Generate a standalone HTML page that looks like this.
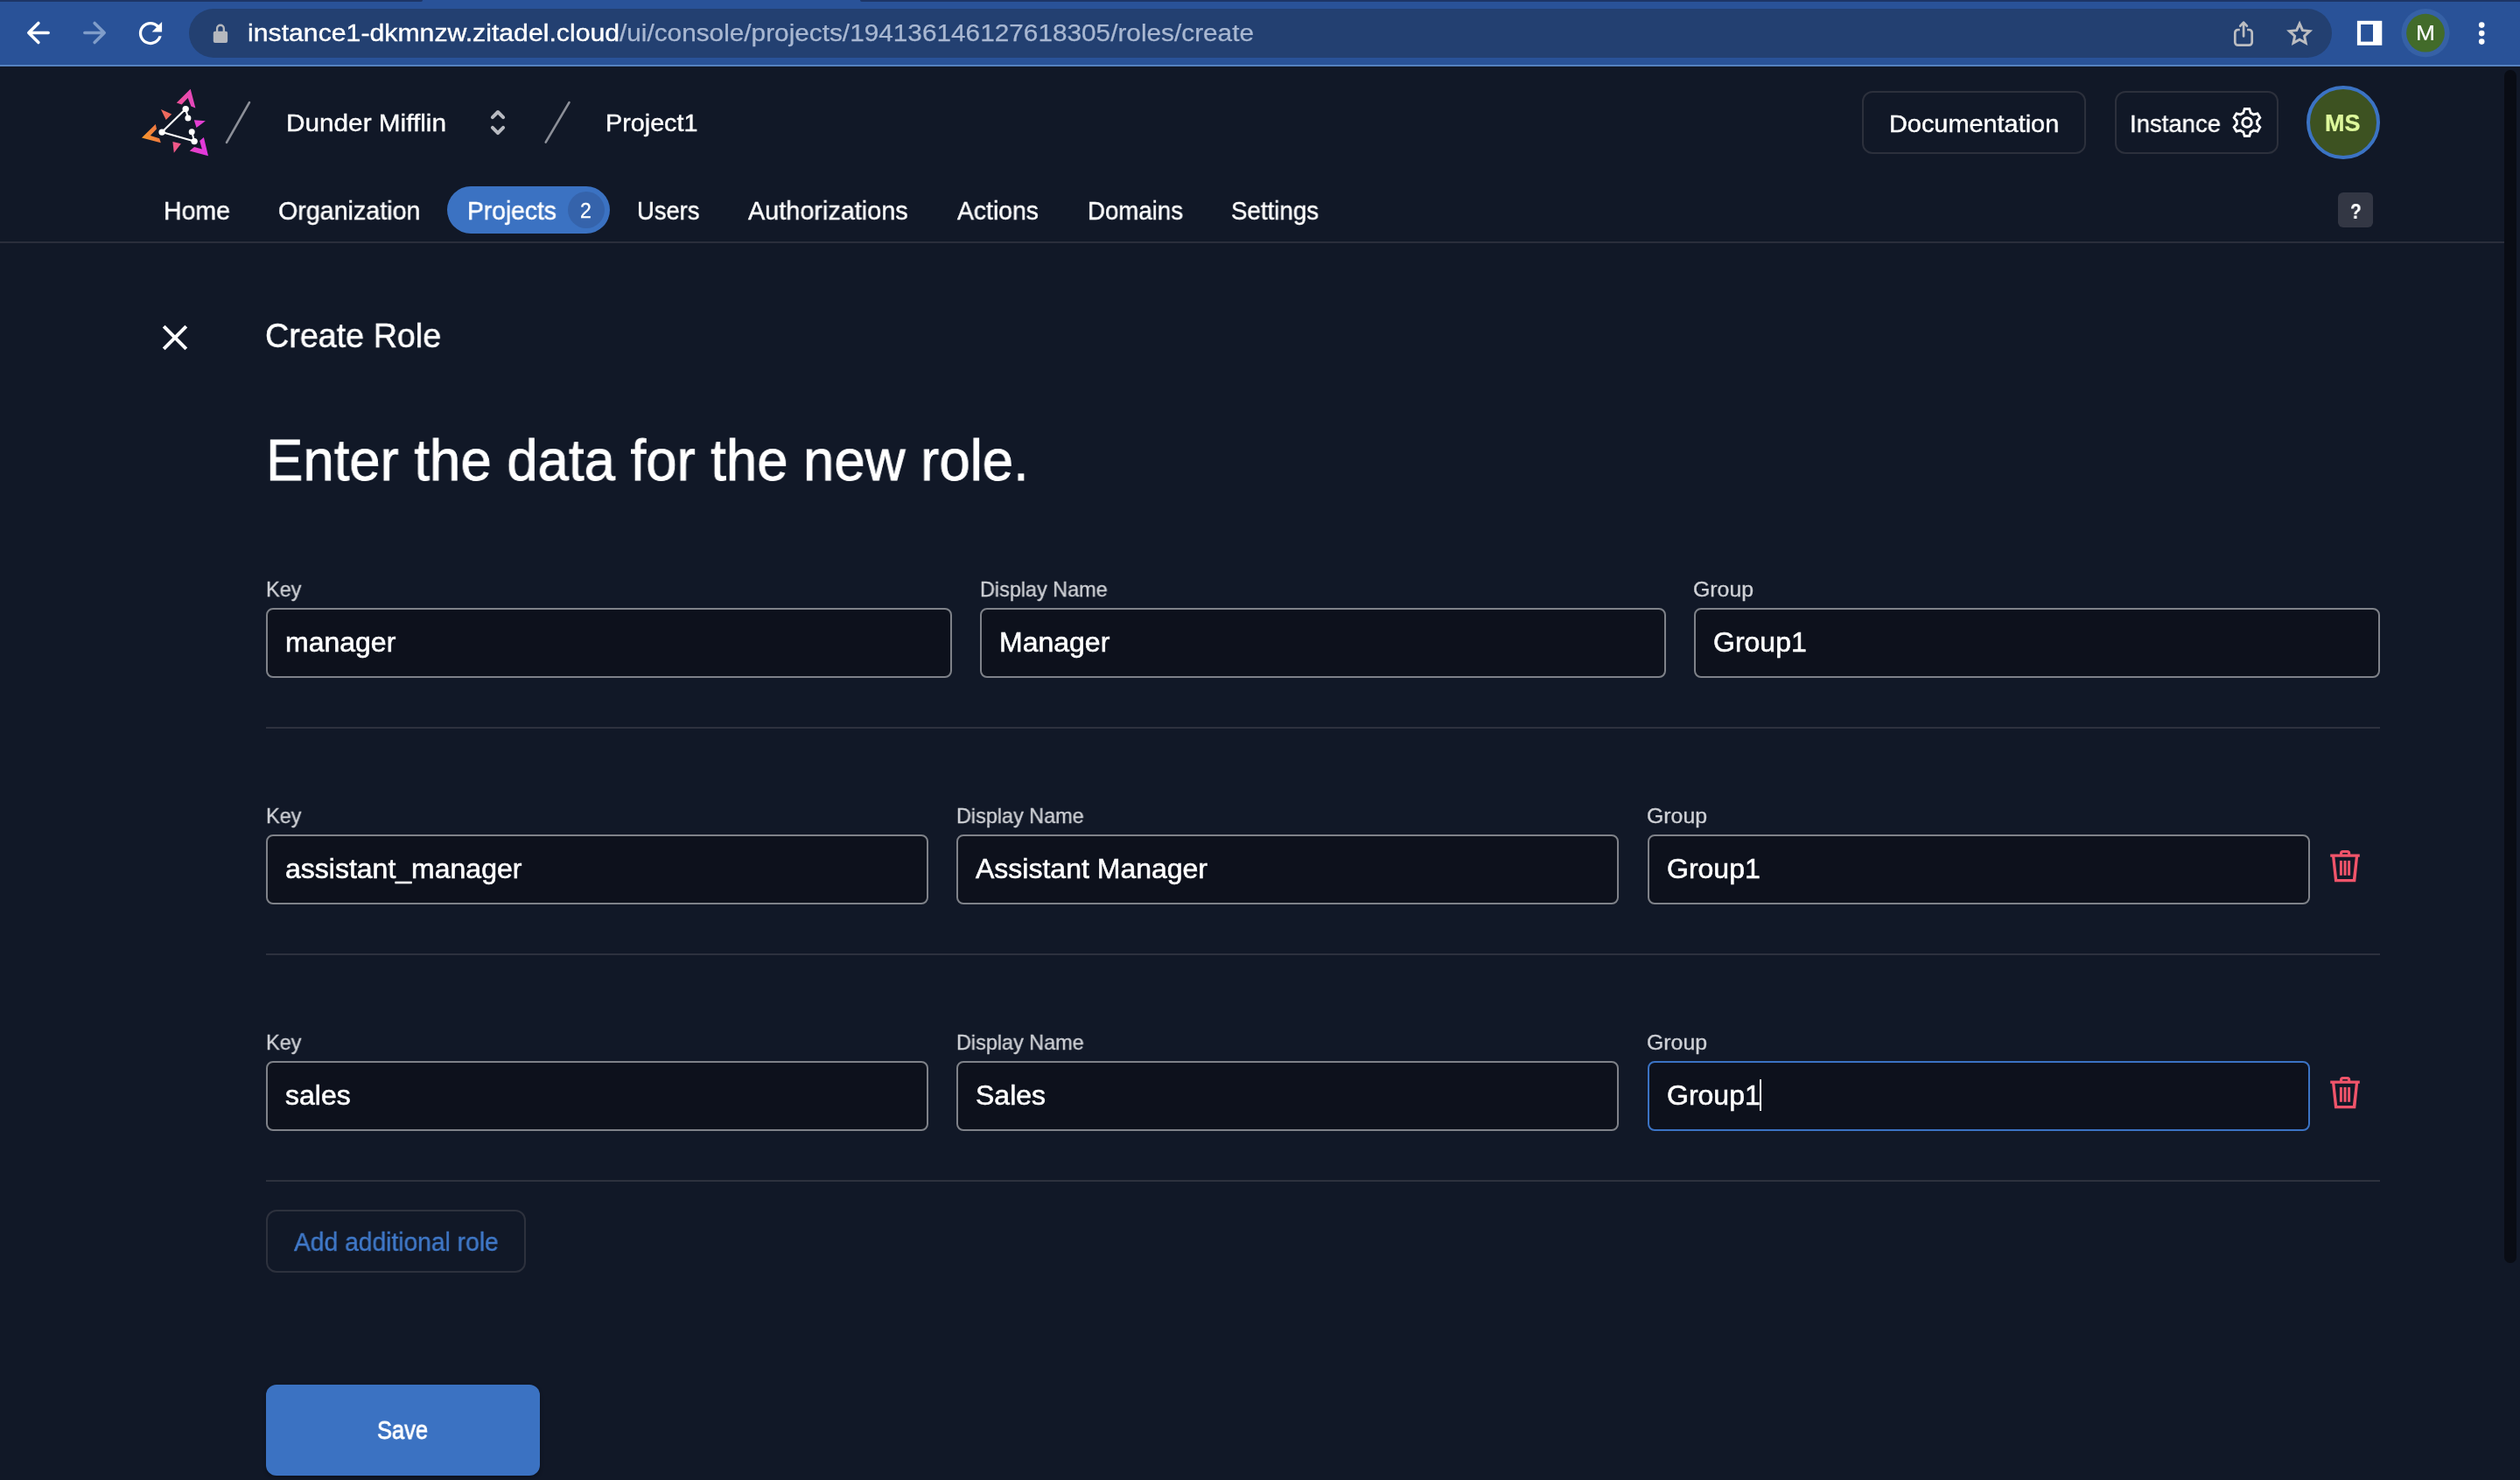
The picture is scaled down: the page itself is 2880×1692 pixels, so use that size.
<!DOCTYPE html>
<html lang="en">
<head>
<meta charset="utf-8">
<title>Create Role</title>
<style>
html,body{margin:0;padding:0}
body{width:2880px;height:1692px;background:#111827;position:relative;overflow:hidden;font-family:"Liberation Sans",sans-serif;-webkit-font-smoothing:antialiased}
.a{position:absolute;box-sizing:border-box}
.t{position:absolute;white-space:nowrap;font-family:"Liberation Sans",sans-serif;will-change:transform;transform-origin:0 50%;-webkit-text-stroke:0.4px currentColor}
.inp{will-change:transform;position:absolute;box-sizing:border-box;height:80px;border:2px solid #7f8289;border-radius:8px;background:#0d111c;color:#fff;font-family:"Liberation Sans",sans-serif;font-size:32px;line-height:74px;-webkit-text-stroke:0.55px #fff;padding:0 0 0 20px;white-space:nowrap;overflow:hidden}
.inp.f{border-color:#3b73c4}
.hr{position:absolute;left:304px;width:2416px;height:2px;background:#2d313e}
svg{position:absolute;overflow:visible}
</style>
</head>
<body>

<!-- ===== browser chrome ===== -->
<div class="a" style="left:0;top:0;width:2880px;height:74px;background:#295298"></div>
<div class="a" style="left:0;top:0;width:483px;height:2px;background:#1d3566;border-bottom-right-radius:3px"></div>
<div class="a" style="left:983px;top:0;width:1897px;height:2px;background:#1d3566;border-bottom-left-radius:3px"></div>
<div class="a" style="left:0;top:74px;width:2880px;height:2px;background:#5682c0"></div>
<div class="a" style="left:216px;top:10px;width:2448.5px;height:56px;border-radius:28px;background:#234071"></div>
<svg width="2880" height="76" viewBox="0 0 2880 76" style="left:0;top:0">
  <!-- back -->
  <g fill="none" stroke="#fff" stroke-width="3.5" stroke-linecap="round" stroke-linejoin="round">
    <path d="M33 37.5H55.2M43.9 26.4L32.8 37.5L43.9 48.6"/>
  </g>
  <!-- forward -->
  <g fill="none" stroke="#809dc9" stroke-width="3.5" stroke-linecap="round" stroke-linejoin="round">
    <path d="M96.8 37.5H119M108.1 26.4L119.2 37.5L108.1 48.6"/>
  </g>
  <!-- reload -->
  <path fill="#fff" transform="translate(152.3 18.4) scale(1.64)" d="M17.65 6.35C16.2 4.9 14.21 4 12 4c-4.42 0-7.99 3.58-7.99 8s3.57 8 7.99 8c3.73 0 6.84-2.55 7.73-6h-2.08c-.82 2.33-3.04 4-5.65 4-3.31 0-6-2.69-6-6s2.69-6 6-6c1.66 0 3.14.69 4.22 1.78L13 11h7V4l-2.35 2.35z"/>
  <!-- lock -->
  <rect x="243.8" y="35.7" width="16.3" height="13.2" rx="2" fill="#b5b8be"/>
  <path d="M248.1 36.5V32.6a3.85 3.85 0 0 1 7.7 0V36.5" fill="none" stroke="#b5b8be" stroke-width="2.3"/>
  <!-- share -->
  <g fill="none" stroke="#bdbec2" stroke-width="2.7" stroke-linejoin="round">
    <path stroke-linecap="butt" d="M2559.8 34H2557.7a3.4 3.4 0 0 0 -3.4 3.4V48.3a3.4 3.4 0 0 0 3.4 3.4H2570.3a3.4 3.4 0 0 0 3.4 -3.4V37.4a3.4 3.4 0 0 0 -3.4 -3.4H2568.1"/>
    <path stroke-linecap="round" d="M2564.1 41.5V25.8M2560.3 29.7L2564.1 25.6L2567.9 29.7"/>
  </g>
  <!-- star -->
  <polygon fill="none" stroke="#bcbdc1" stroke-width="3" stroke-linejoin="miter" points="2628.1,27.2 2631.5,34.7 2639.7,35.6 2633.6,41.2 2635.2,49.2 2628.1,45.2 2621.0,49.2 2622.6,41.2 2616.5,35.6 2624.7,34.7"/>
  <!-- side panel -->
  <rect x="2693.9" y="23.8" width="28.4" height="28" fill="#fff"/>
  <rect x="2698.1" y="28" width="13.9" height="19.6" fill="#295298"/>
  <!-- profile -->
  <circle cx="2772" cy="37.7" r="27.6" fill="#3661a6"/>
  <circle cx="2772" cy="37.7" r="21.9" fill="#426b2a"/>
  <!-- menu -->
  <circle cx="2836.2" cy="28.6" r="3.3" fill="#fff"/><circle cx="2836.2" cy="38.1" r="3.3" fill="#fff"/><circle cx="2836.2" cy="47.6" r="3.3" fill="#fff"/>
</svg>

<!-- ===== scrollbar ===== -->
<div class="a" style="left:2862px;top:80px;width:14px;height:1364px;border-radius:7px;background:#090c14"></div>

<!-- ===== header ===== -->
<svg width="700" height="110" viewBox="140 90 700 110" style="left:140px;top:90px">
  <defs>
    <linearGradient id="g1" x1="201" y1="118" x2="224" y2="118" gradientUnits="userSpaceOnUse"><stop offset="0" stop-color="#ee5192"/><stop offset="1" stop-color="#e446c3"/></linearGradient>
    <linearGradient id="g2" x1="162" y1="158" x2="184" y2="150" gradientUnits="userSpaceOnUse"><stop offset="0" stop-color="#f7992a"/><stop offset="1" stop-color="#ef7245"/></linearGradient>
    <linearGradient id="g3" x1="216" y1="170" x2="238" y2="170" gradientUnits="userSpaceOnUse"><stop offset="0" stop-color="#e845bf"/><stop offset="1" stop-color="#e135e2"/></linearGradient>
  </defs>
  <polygon fill="url(#g1)" points="217.7,101.8 201.8,117.4 207.6,119.4 214.7,112 218.4,121.4 223.4,123.4"/>
  <polygon fill="url(#g2)" points="162,157.6 177.8,142 179,147.4 171.8,155 182.2,158.2 183.8,163.3"/>
  <polygon fill="url(#g3)" points="238,178.2 232.9,156.9 228.2,161 230.9,170.4 222.1,168 216.7,172.4"/>
  <polygon fill="#ef6a5e" points="183.9,125 196.2,130.5 189.7,137.1"/>
  <polygon fill="#e33fd2" points="221.8,137.3 234.9,138.3 224.5,146.1"/>
  <polygon fill="#ef5888" points="197.4,162 206.9,164.3 198.8,174.8"/>
  <g stroke="#fff" stroke-width="2.1" fill="none" stroke-linecap="round">
    <path d="M212.2 124.6L185.1 151.1L222.1 161.6M212.2 124.6L214.9 134.9M219.2 150.8L222.1 161.6"/>
  </g>
  <g fill="#fff">
    <circle cx="212.2" cy="124.6" r="3.7"/><circle cx="214.9" cy="134.9" r="3.5"/><circle cx="185.1" cy="151.1" r="3.7"/><circle cx="219.2" cy="150.8" r="3.5"/><circle cx="222.1" cy="161.6" r="3.7"/>
  </g>
  <g stroke="#8c8f98" stroke-width="2.6" stroke-linecap="round">
    <path d="M285 117.2L259 162.8"/>
    <path d="M650.5 117.2L623.7 162.6"/>
  </g>
  <g stroke="#b8bac1" stroke-width="4" fill="none" stroke-linecap="round" stroke-linejoin="round">
    <path d="M562.9 134.1L569 128L575.1 134.1M562.9 145.9L569 152.1L575.1 145.9"/>
  </g>
</svg>
<div class="a" style="left:2128px;top:104px;width:256px;height:71.5px;border:2px solid #2c303c;border-radius:12px"></div>
<div class="a" style="left:2416.5px;top:104px;width:187.5px;height:71.5px;border:2px solid #2c303c;border-radius:12px"></div>
<svg width="40" height="40" viewBox="-20 -20 40 40" style="left:2547.7px;top:119.7px">
  <path id="gear" fill="none" stroke="#fff" stroke-width="2.8" stroke-linejoin="miter" d="M-11.56 -1.82L-14.82 -5.33 L-12.02 -10.17 L-7.36 -9.10A11.7 11.7 0 0 1 -4.20 -10.92L-2.80 -15.50 L2.80 -15.50 L4.20 -10.92A11.7 11.7 0 0 1 7.36 -9.10L12.02 -10.17 L14.82 -5.33 L11.56 -1.82A11.7 11.7 0 0 1 11.56 1.82L14.82 5.33 L12.02 10.17 L7.36 9.10A11.7 11.7 0 0 1 4.20 10.92L2.80 15.50 L-2.80 15.50 L-4.20 10.92A11.7 11.7 0 0 1 -7.36 9.10L-12.02 10.17 L-14.82 5.33 L-11.56 1.82A11.7 11.7 0 0 1 -11.56 -1.82 Z"/>
  <circle cx="0" cy="0" r="5.2" fill="none" stroke="#fff" stroke-width="3"/>
</svg>
<div class="a" style="left:2636px;top:98px;width:83.8px;height:83.8px;border-radius:50%;background:#3d5221;border:4px solid #3b73c4"></div>

<!-- ===== nav ===== -->
<div class="a" style="left:510.8px;top:212.8px;width:186.3px;height:54.2px;border-radius:27.1px;background:#3b72c2"></div>
<div class="a" style="left:648.95px;top:218.9px;width:42px;height:42px;border-radius:50%;background:#3563ab"></div>
<div class="a" style="left:2672px;top:220px;width:40px;height:39.5px;border-radius:6px;background:#333744"></div>
<div class="a" style="left:0;top:275.5px;width:2862px;height:2px;background:#2a2e3b"></div>

<!-- ===== content ===== -->
<svg width="40" height="40" viewBox="180 366 40 40" style="left:180px;top:366px">
  <path d="M187.2 373.2L212.8 398.8M212.8 373.2L187.2 398.8" stroke="#fff" stroke-width="4" fill="none" stroke-linecap="butt"/>
</svg>
<div class="hr" style="top:831px"></div>
<div class="hr" style="top:1090px"></div>
<div class="hr" style="top:1349px"></div>
<div class="a" style="left:304px;top:1383px;width:297px;height:72px;border:2px solid #2d313d;border-radius:12px"></div>
<div class="a" style="left:304px;top:1583px;width:313px;height:104px;border-radius:12px;background:#3b72c2;box-shadow:0 2px 4px rgba(0,0,0,.3)"></div>

<span class="t" id="t_urlhost" style="left:283.20px;top:22.04px;font-size:27px;line-height:32.4px;color:#ffffff;font-weight:400;transform:scaleX(1.1196);-webkit-text-stroke-width:0.36px">instance1-dkmnzw.zitadel.cloud</span>
<span class="t" id="t_urlpath" style="left:707.90px;top:22.04px;font-size:27px;line-height:32.4px;color:#a9b8d2;font-weight:400;transform:scaleX(1.1027);-webkit-text-stroke-width:0.25px">/ui/console/projects/194136146127618305/roles/create</span>
<span class="t" id="t_profM" style="left:2761.03px;top:24.53px;font-size:23px;line-height:27.6px;color:#ffffff;font-weight:400;transform:scaleX(1.1464);-webkit-text-stroke-width:0.15px">M</span>
<span class="t" id="t_org" style="left:326.80px;top:123.42px;font-size:28.5px;line-height:34.2px;color:#ffffff;font-weight:400;transform:scaleX(1.0436);-webkit-text-stroke-width:0.38px">Dunder Mifflin</span>
<span class="t" id="t_proj" style="left:692.20px;top:123.42px;font-size:28.5px;line-height:34.2px;color:#ffffff;font-weight:400;transform:scaleX(1.0088);-webkit-text-stroke-width:0.38px">Project1</span>
<span class="t" id="t_docs" style="left:2158.90px;top:124.12px;font-size:28.5px;line-height:34.2px;color:#ffffff;font-weight:400;transform:scaleX(1.0133);-webkit-text-stroke-width:0.38px">Documentation</span>
<span class="t" id="t_inst" style="left:2434.40px;top:124.12px;font-size:28.5px;line-height:34.2px;color:#ffffff;font-weight:400;transform:scaleX(0.9648);-webkit-text-stroke-width:0.38px">Instance</span>
<span class="t" id="t_ms" style="left:2656.90px;top:125.14px;font-size:27px;line-height:32.4px;color:#def89c;font-weight:700;transform:scaleX(1.0010);-webkit-text-stroke-width:0.20px">MS</span>
<span class="t" id="t_home" style="left:187.40px;top:223.62px;font-size:29px;line-height:34.8px;color:#ffffff;font-weight:400;transform:scaleX(0.9820);-webkit-text-stroke-width:0.39px">Home</span>
<span class="t" id="t_orgn" style="left:317.80px;top:223.62px;font-size:29px;line-height:34.8px;color:#ffffff;font-weight:400;transform:scaleX(0.9877);-webkit-text-stroke-width:0.39px">Organization</span>
<span class="t" id="t_projs" style="left:534.20px;top:223.62px;font-size:29px;line-height:34.8px;color:#ffffff;font-weight:400;transform:scaleX(0.9725);-webkit-text-stroke-width:0.50px">Projects</span>
<span class="t" id="t_badge" style="left:663.00px;top:228.32px;font-size:23px;line-height:27.6px;color:#ffffff;font-weight:400;transform:scaleX(1.0000);-webkit-text-stroke-width:0.31px">2</span>
<span class="t" id="t_users" style="left:727.80px;top:223.62px;font-size:29px;line-height:34.8px;color:#ffffff;font-weight:400;transform:scaleX(0.9438);-webkit-text-stroke-width:0.39px">Users</span>
<span class="t" id="t_auth" style="left:855.30px;top:223.62px;font-size:29px;line-height:34.8px;color:#ffffff;font-weight:400;transform:scaleX(0.9940);-webkit-text-stroke-width:0.39px">Authorizations</span>
<span class="t" id="t_act" style="left:1094.20px;top:223.62px;font-size:29px;line-height:34.8px;color:#ffffff;font-weight:400;transform:scaleX(0.9777);-webkit-text-stroke-width:0.39px">Actions</span>
<span class="t" id="t_dom" style="left:1242.75px;top:223.62px;font-size:29px;line-height:34.8px;color:#ffffff;font-weight:400;transform:scaleX(0.9527);-webkit-text-stroke-width:0.39px">Domains</span>
<span class="t" id="t_sett" style="left:1406.90px;top:223.62px;font-size:29px;line-height:34.8px;color:#ffffff;font-weight:400;transform:scaleX(0.9553);-webkit-text-stroke-width:0.39px">Settings</span>
<span class="t" id="t_help" style="left:2685.83px;top:229.32px;font-size:23px;line-height:27.6px;color:#ffffff;font-weight:700;transform:scaleX(0.8978);-webkit-text-stroke-width:0.20px">?</span>
<span class="t" id="t_title" style="left:303.32px;top:360.98px;font-size:39px;line-height:46.8px;color:#ffffff;font-weight:400;transform:scaleX(0.9666);-webkit-text-stroke-width:0.53px">Create Role</span>
<span class="t" id="t_h1" style="left:303.80px;top:485.78px;font-size:67px;line-height:80.4px;color:#ffffff;font-weight:400;transform:scaleX(0.9476);-webkit-text-stroke-width:0.90px">Enter the data for the new role.</span>
<span class="t" id="t_add" style="left:336.00px;top:1403.05px;font-size:29px;line-height:34.8px;color:#4079c9;font-weight:400;transform:scaleX(0.9732);-webkit-text-stroke-width:0.39px">Add additional role</span>
<span class="t" id="t_save" style="left:431.48px;top:1617.99px;font-size:29px;line-height:34.8px;color:#ffffff;font-weight:400;transform:scaleX(0.8781);-webkit-text-stroke-width:0.80px">Save</span>
<span class="t" id="t_lk0" style="left:303.73px;top:660.00px;font-size:24px;line-height:28.8px;color:#cfd1d6;font-weight:400;transform:scaleX(0.9796);-webkit-text-stroke-width:0.32px">Key</span>
<span class="t" id="t_ld0" style="left:1119.80px;top:660.00px;font-size:24px;line-height:28.8px;color:#cfd1d6;font-weight:400;transform:scaleX(0.9753);-webkit-text-stroke-width:0.32px">Display Name</span>
<span class="t" id="t_lg0" style="left:1934.90px;top:660.00px;font-size:24px;line-height:28.8px;color:#cfd1d6;font-weight:400;transform:scaleX(1.0354);-webkit-text-stroke-width:0.32px">Group</span>
<span class="t" id="t_lk1" style="left:303.73px;top:919.00px;font-size:24px;line-height:28.8px;color:#cfd1d6;font-weight:400;transform:scaleX(0.9796);-webkit-text-stroke-width:0.32px">Key</span>
<span class="t" id="t_ld1" style="left:1092.92px;top:919.00px;font-size:24px;line-height:28.8px;color:#cfd1d6;font-weight:400;transform:scaleX(0.9753);-webkit-text-stroke-width:0.32px">Display Name</span>
<span class="t" id="t_lg1" style="left:1882.40px;top:919.00px;font-size:24px;line-height:28.8px;color:#cfd1d6;font-weight:400;transform:scaleX(1.0354);-webkit-text-stroke-width:0.32px">Group</span>
<span class="t" id="t_lk2" style="left:303.73px;top:1178.00px;font-size:24px;line-height:28.8px;color:#cfd1d6;font-weight:400;transform:scaleX(0.9796);-webkit-text-stroke-width:0.32px">Key</span>
<span class="t" id="t_ld2" style="left:1092.92px;top:1178.00px;font-size:24px;line-height:28.8px;color:#cfd1d6;font-weight:400;transform:scaleX(0.9753);-webkit-text-stroke-width:0.32px">Display Name</span>
<span class="t" id="t_lg2" style="left:1882.40px;top:1178.00px;font-size:24px;line-height:28.8px;color:#cfd1d6;font-weight:400;transform:scaleX(1.0354);-webkit-text-stroke-width:0.32px">Group</span>
<!-- ===== inputs ===== -->
<div class="inp" style="left:304px;top:695px;width:784px">manager</div>
<div class="inp" style="left:1120px;top:695px;width:784px">Manager</div>
<div class="inp" style="left:1936px;top:695px;width:784px">Group1</div>
<div class="inp" style="left:304px;top:954px;width:757.2px">assistant_manager</div>
<div class="inp" style="left:1093.3px;top:954px;width:757.2px">Assistant Manager</div>
<div class="inp" style="left:1883px;top:954px;width:757.2px">Group1</div>
<svg width="80" height="80" viewBox="0 0 80 80" style="left:2640px;top:950px">
  <g fill="#f0546a">
    <path fill-rule="evenodd" d="M23.2 26.5H34V25.4a3.5 3.5 0 0 1 3.5 -3.5H42.7a3.5 3.5 0 0 1 3.5 3.5V26.5H56.8V29.7H55.1L52.2 58.3H28.1L25.1 29.7H23.2ZM37 26.5H43.2V25.9a0.9 0.9 0 0 0 -0.9 -0.9H37.9a0.9 0.9 0 0 0 -0.9 0.9ZM28.4 29.7L31.2 54.9H48.9L51.8 29.7Z"/>
    <rect x="33.9" y="33.9" width="3" height="16.9"/><rect x="38.5" y="33.9" width="3.1" height="16.9"/><rect x="43.1" y="33.9" width="3" height="16.9"/>
  </g>
</svg>
<div class="inp" style="left:304px;top:1213px;width:757.2px">sales</div>
<div class="inp" style="left:1093.3px;top:1213px;width:757.2px">Sales</div>
<div class="inp f" style="left:1883px;top:1213px;width:757.2px">Group1</div>
<svg width="80" height="80" viewBox="0 0 80 80" style="left:2640px;top:1209px">
  <g fill="#f0546a">
    <path fill-rule="evenodd" d="M23.2 26.5H34V25.4a3.5 3.5 0 0 1 3.5 -3.5H42.7a3.5 3.5 0 0 1 3.5 3.5V26.5H56.8V29.7H55.1L52.2 58.3H28.1L25.1 29.7H23.2ZM37 26.5H43.2V25.9a0.9 0.9 0 0 0 -0.9 -0.9H37.9a0.9 0.9 0 0 0 -0.9 0.9ZM28.4 29.7L31.2 54.9H48.9L51.8 29.7Z"/>
    <rect x="33.9" y="33.9" width="3" height="16.9"/><rect x="38.5" y="33.9" width="3.1" height="16.9"/><rect x="43.1" y="33.9" width="3" height="16.9"/>
  </g>
</svg>
<div class="a" style="left:2010.9px;top:1234px;width:2.2px;height:35.6px;background:#fff"></div>

</body></html>
